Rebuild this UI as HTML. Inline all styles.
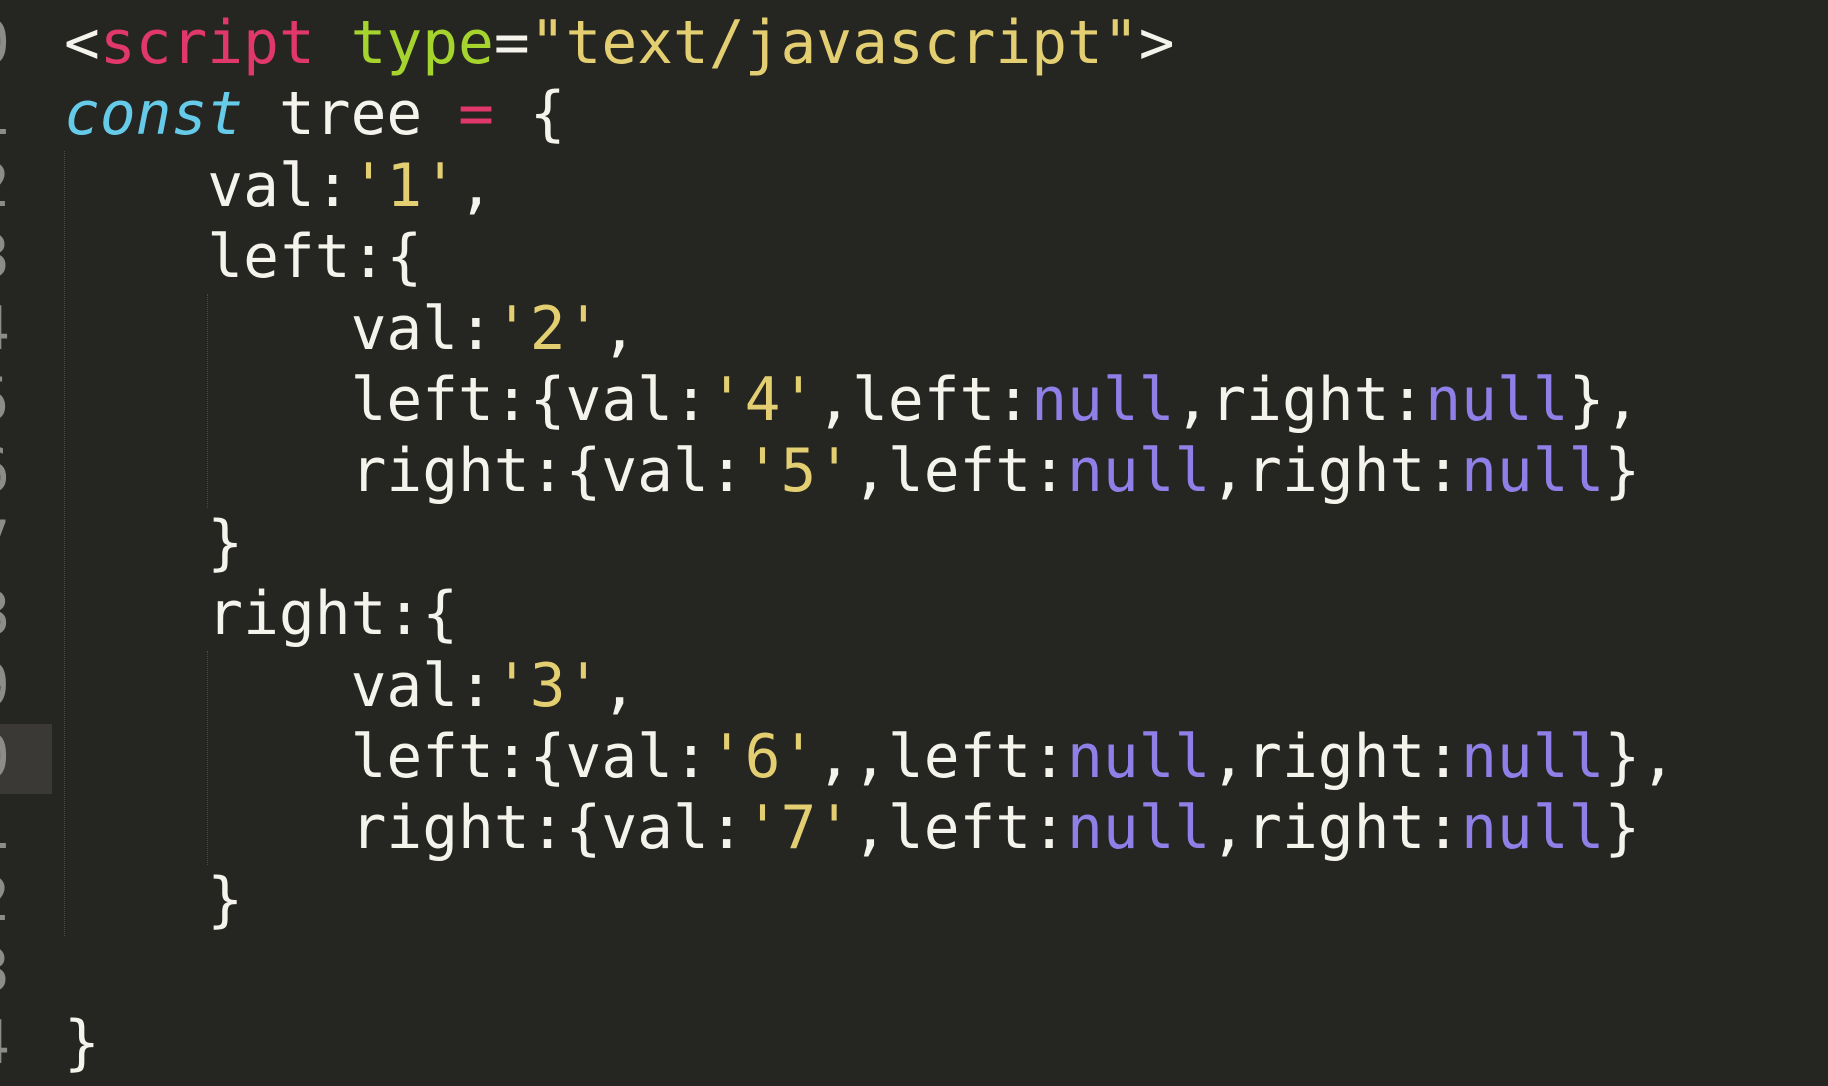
<!DOCTYPE html>
<html><head><meta charset="utf-8"><style>
html,body{margin:0;padding:0;width:1828px;height:1086px;overflow:hidden;background:#252521;}
.w{position:relative;width:1828px;height:1086px;}
.l{position:absolute;left:64px;height:71.4px;line-height:71.4px;font-family:"DejaVu Sans Mono","Liberation Mono",monospace;font-size:59.5px;color:#f4f4ec;white-space:pre;}
.n{position:absolute;right:1818px;height:71.4px;line-height:71.4px;font-family:"DejaVu Sans Mono",monospace;font-size:59.5px;color:#8c8c88;text-align:right;}
.p{color:#e0386a}.g{color:#a6d42e}.y{color:#e3cf72}.c{color:#66cbe8;font-style:italic}.v{color:#8f80e8}
.hl{position:absolute;left:0;top:724px;width:52px;height:70px;background:#3a3935;}
.gd{position:absolute;width:0;border-left:1px dotted #4a4a45;}
</style></head><body><div class="w">
<div class="hl"></div>
<div class="gd" style="left:64px;top:151px;height:785px"></div>
<div class="gd" style="left:207px;top:294px;height:214px"></div>
<div class="gd" style="left:207px;top:651px;height:214px"></div>
<div class="n" style="top:8px">0</div>
<div class="n" style="top:79.4px">1</div>
<div class="n" style="top:150.8px">2</div>
<div class="n" style="top:222.2px">3</div>
<div class="n" style="top:293.6px">4</div>
<div class="n" style="top:365px">5</div>
<div class="n" style="top:436.4px">6</div>
<div class="n" style="top:507.8px">7</div>
<div class="n" style="top:579.2px">8</div>
<div class="n" style="top:650.6px">9</div>
<div class="n" style="top:722px">0</div>
<div class="n" style="top:793.4px">1</div>
<div class="n" style="top:864.8px">2</div>
<div class="n" style="top:936.2px">3</div>
<div class="n" style="top:1007.6px">4</div>
<div class="l" style="top:8px">&lt;<span class="p">script</span> <span class="g">type</span>=<span class="y">"text/javascript"</span>&gt;</div>
<div class="l" style="top:79.4px"><span class="c">const</span> tree <span class="p">=</span> {</div>
<div class="l" style="top:150.8px">    val:<span class="y">'1'</span>,</div>
<div class="l" style="top:222.2px">    left:{</div>
<div class="l" style="top:293.6px">        val:<span class="y">'2'</span>,</div>
<div class="l" style="top:365px">        left:{val:<span class="y">'4'</span>,left:<span class="v">null</span>,right:<span class="v">null</span>},</div>
<div class="l" style="top:436.4px">        right:{val:<span class="y">'5'</span>,left:<span class="v">null</span>,right:<span class="v">null</span>}</div>
<div class="l" style="top:507.8px">    }</div>
<div class="l" style="top:579.2px">    right:{</div>
<div class="l" style="top:650.6px">        val:<span class="y">'3'</span>,</div>
<div class="l" style="top:722px">        left:{val:<span class="y">'6'</span>,,left:<span class="v">null</span>,right:<span class="v">null</span>},</div>
<div class="l" style="top:793.4px">        right:{val:<span class="y">'7'</span>,left:<span class="v">null</span>,right:<span class="v">null</span>}</div>
<div class="l" style="top:864.8px">    }</div>
<div class="l" style="top:1007.6px">}</div>
</div></body></html>
